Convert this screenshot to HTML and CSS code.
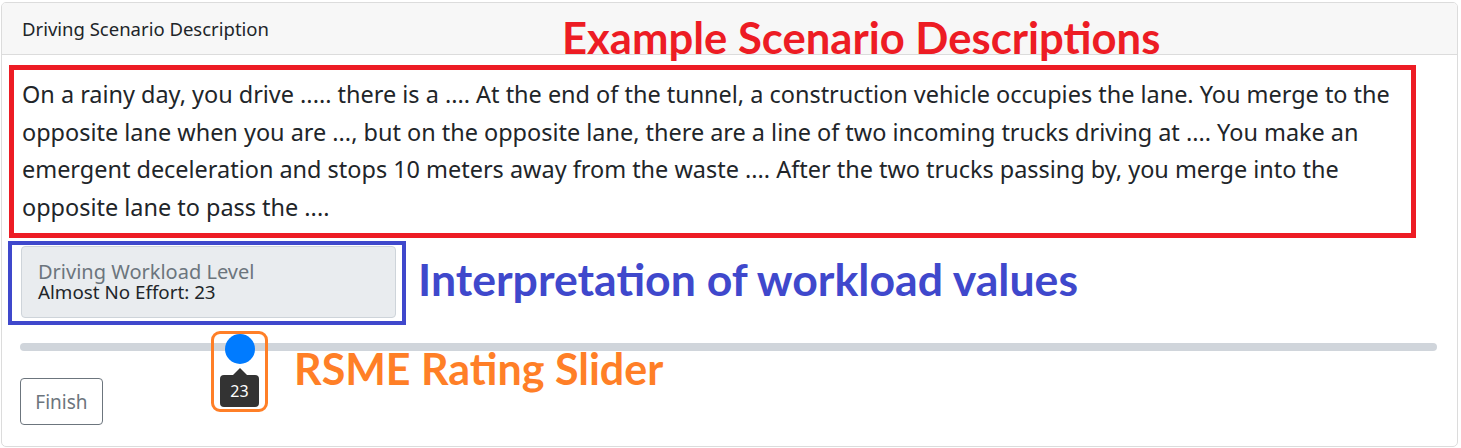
FILE: index.html
```html
<!DOCTYPE html>
<html lang="en">
<head>
<meta charset="utf-8">
<title>Driving Scenario Description</title>
<link rel="stylesheet" href="styles.css">
</head>
<body>
<div class="card">
  <div class="card-header">
    <span class="header-title">Driving Scenario Description</span>
    <span class="note note-red">Example Scenario Descriptions</span>
  </div>
  <div class="card-body">
    <p class="desc">On a rainy day, you drive ..... there is a .... At the end of the tunnel, a construction vehicle occupies the lane. You merge to the<br>opposite lane when you are ..., but on the opposite lane, there are a line of two incoming trucks driving at .... You make an<br>emergent deceleration and stops 10 meters away from the waste .... After the two trucks passing by, you merge into the<br>opposite lane to pass the ....</p>
    <div class="level-row">
      <div class="level-frame">
        <div class="level-box">
          <div class="level-label">Driving Workload Level</div>
          <div class="level-value">Almost No Effort: 23</div>
        </div>
      </div>
      <span class="note note-blue">Interpretation of workload values</span>
    </div>
    <div class="slider">
      <div class="track"></div>
      <div class="thumb"></div>
      <div class="tip">23</div>
      <div class="slider-frame"></div>
      <span class="note note-orange">RSME Rating Slider</span>
    </div>
    <button class="btn-finish" type="button">Finish</button>
  </div>
</div>
</body>
</html>
```

FILE: styles.css
```css
html, body {
  margin: 0;
  background: #ffffff;
}
body {
  padding: 2px 0 0 1px;
  font-family: "Noto Sans", "Open Sans", sans-serif;
  color: #212529;
}
.card {
  position: relative;
  box-sizing: border-box;
  width: 1457px;
  height: 445px;
  border: 1px solid #dcdcdc;
  border-radius: 5px;
  overflow: hidden;
}
.card-header {
  position: relative;
  box-sizing: border-box;
  height: 52px;
  padding-left: 20px;
  display: flex;
  align-items: center;
  background: #f7f7f7;
  border-bottom: 1px solid #dcdcdc;
}
.header-title {
  font-size: 18.5px;
  color: #212529;
  margin-top: 0;
}
.note {
  position: absolute;
  font-family: "Lato", sans-serif;
  font-weight: 700;
  font-size: 43px;
  line-height: 1;
  white-space: nowrap;
}
.note-red {
  color: #ed1c24;
  font-size: 43.6px;
  left: 560px;
  top: 13px;
}
.card-body {
  padding: 10px 41px 0 7px;
}
.desc {
  margin: 0;
  border: 5px solid #ed1c24;
  padding: 6px 0 7px 8px;
  font-size: 23.45px;
  line-height: 37.5px;
  white-space: nowrap;
  color: #212529;
}
.level-row {
  position: relative;
  margin: 3px 0 0 -1px;
}
.level-frame {
  box-sizing: border-box;
  width: 398px;
  height: 84px;
  border: 4px solid #3f48cc;
  padding: 1px 6px 3px 9px;
}
.level-box {
  box-sizing: border-box;
  height: 72px;
  background: #e9ecef;
  border: 1px solid #ced4da;
  border-radius: 4px;
  padding: 14px 0 0 16px;
}
.level-label {
  font-size: 20px;
  line-height: 21px;
  color: #6c757d;
}
.level-value {
  font-size: 18.8px;
  line-height: 21px;
  color: #212529;
}
.note-blue {
  color: #3f48cc;
  font-size: 44.6px;
  left: 410px;
  top: 16px;
}
.slider {
  position: relative;
  height: 8px;
  margin: 18px -21px 0 11px;
}
.track {
  height: 8px;
  border-radius: 4px;
  background: #d0d5db;
}
.thumb {
  position: absolute;
  left: 205px;
  top: -9px;
  width: 30px;
  height: 30px;
  border-radius: 50%;
  background: #007bff;
}
.tip {
  position: absolute;
  left: 200px;
  top: 32px;
  width: 39px;
  height: 32px;
  border-radius: 4px;
  background: #333333;
  color: #ffffff;
  font-size: 16px;
  line-height: 32px;
  text-align: center;
}
.tip::before {
  content: "";
  position: absolute;
  left: 50%;
  top: -7px;
  margin-left: -7px;
  border-left: 7px solid transparent;
  border-right: 7px solid transparent;
  border-bottom: 7px solid #333333;
}
.slider-frame {
  position: absolute;
  left: 191px;
  top: -12px;
  width: 57px;
  height: 81px;
  box-sizing: border-box;
  border: 3px solid #ff7f27;
  border-radius: 9px;
}
.note-orange {
  color: #ff7f27;
  left: 274px;
  top: 4px;
}
.btn-finish {
  display: block;
  box-sizing: border-box;
  margin: 27px 0 0 11px;
  width: 83px;
  height: 47px;
  border: 1px solid #6c757d;
  border-radius: 4px;
  background: #ffffff;
  color: #6c757d;
  font-family: "Noto Sans", "Open Sans", sans-serif;
  font-size: 19px;
  padding: 0;
}
```
